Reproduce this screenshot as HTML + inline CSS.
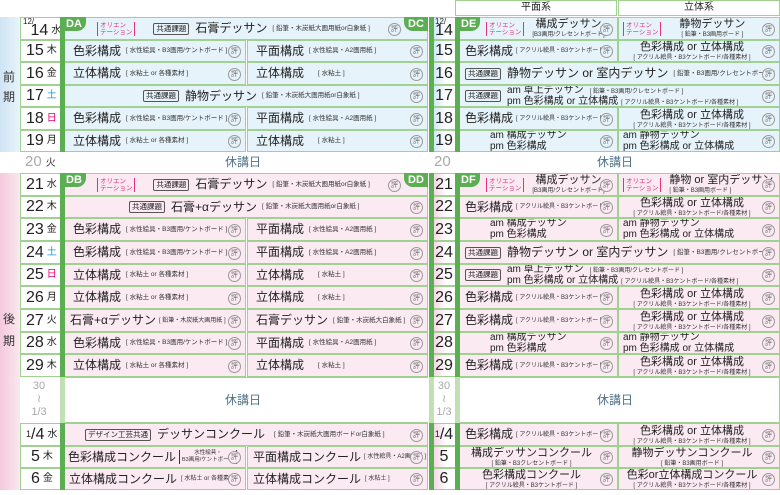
<!DOCTYPE html><html><head><meta charset="utf-8"><style>
body{margin:0;width:780px;height:495px;background:#fff;position:relative;overflow:hidden;font-family:"Liberation Sans","Noto Sans CJK JP",sans-serif;color:#222}
.a{position:absolute}
.r{position:absolute;left:0;width:780px}
.c{position:absolute;top:0;height:100%;box-sizing:border-box;border:1px solid #9fd291;display:flex;align-items:center;white-space:nowrap;font-size:12px;line-height:13px;padding-left:8px;overflow:hidden}
.f .c{background:#e6f3fb}.b .c{background:#fbeaf2}
.col{flex-direction:column;justify-content:center;font-size:11px;line-height:12px;padding-left:0;padding-right:14px}
.col .ss,.two .ss{line-height:8px;position:relative;top:1px}
.col.l{align-items:flex-start;padding-left:30px}
.h{position:absolute;right:4px;top:50%;margin-top:-6px;width:11px;height:11px;border:1px solid #999;border-radius:50%;font-size:7px;line-height:11px;text-align:center;color:#666;background:inherit}
.s{font-size:6.5px;margin-left:5px;color:#333;line-height:8px}
.ss{font-size:6px;color:#333;line-height:8px}
.k{border:1px solid #555;border-radius:2px;font-size:7.5px;padding:0 2px;line-height:10px;margin-right:6px}
.o{font-size:6.5px;line-height:7px;color:#e5307e;border-left:1px solid #e5307e;border-right:1px solid #e5307e;padding:0 2px;margin-right:8px}
.l1{left:64px;width:182px}.l2{left:247px;width:181px}.lf{left:64px;width:364px}
.r1{left:459px;width:159px}.r2{left:618px;width:162px}.rf{left:459px;width:321px}
.d{position:absolute;top:0;height:100%;box-sizing:border-box;border:1px solid #9fd291;background:#fff;display:flex;align-items:center;font-size:16px;line-height:16px}
.dl{left:20px;width:41px;padding-left:5px}
.dl i{font-style:normal;font-size:10px;margin-left:3px}
.dr{left:432px;width:24px;justify-content:center;background:linear-gradient(90deg,#cfe6f5,#fff 60%)}
.b .dr{background:linear-gradient(90deg,#f6d3e2,#fff 60%)}
.sat{color:#1a9ad6!important}.sun{color:#e5006e!important}
.tab{position:absolute;background:#5cae52;color:#fff;font-weight:bold;font-size:11px;line-height:14px;padding:0 4px;border-radius:0 0 9px 0;z-index:3}
.bar{position:absolute;background:#5cae52;width:5px;z-index:2}
.hol{position:absolute;color:#4f7487;font-size:12px;line-height:14px}
.am{font-size:10px;line-height:10.5px}
.am>span:nth-child(2){position:relative;top:0.5px}
.two{display:flex;flex-direction:column;align-items:center;line-height:11px;font-size:11px}
</style></head><body>
<div class="a" style="left:0;top:17px;width:20px;height:135px;background:linear-gradient(90deg,#cfe4f4,#e9f3fb)"></div>
<div class="a" style="left:0;top:173px;width:20px;height:317px;background:linear-gradient(90deg,#f4c9dc,#fbe8f0)"></div>
<div class="a" style="left:3px;top:67px;font-size:12px;line-height:20px;color:#333">前<br>期</div>
<div class="a" style="left:3px;top:308px;font-size:12px;line-height:22px;color:#333">後<br>期</div>
<div class="a" style="left:455px;top:0;width:162px;height:16px;border:1px solid #9fd291;box-sizing:border-box;font-size:10px;text-align:center;line-height:14px">平面系</div>
<div class="a" style="left:618px;top:0;width:162px;height:16px;border:1px solid #9fd291;box-sizing:border-box;font-size:10px;text-align:center;line-height:14px">立体系</div>
<div class="bar" style="left:60px;top:17px;height:135px"></div>
<div class="bar" style="left:60px;top:173px;height:204px"></div>
<div class="bar" style="left:60px;top:377px;height:46px;background:#c3e0b5"></div>
<div class="bar" style="left:60px;top:423px;height:67px"></div>
<div class="bar" style="left:429px;top:17px;height:135px"></div>
<div class="bar" style="left:429px;top:173px;height:204px"></div>
<div class="bar" style="left:429px;top:377px;height:46px;background:#c3e0b5"></div>
<div class="bar" style="left:429px;top:423px;height:67px"></div>
<div class="bar" style="left:455px;top:17px;height:135px"></div>
<div class="bar" style="left:455px;top:173px;height:204px"></div>
<div class="bar" style="left:455px;top:377px;height:46px;background:#c3e0b5"></div>
<div class="bar" style="left:455px;top:423px;height:67px"></div>
<div class="tab" style="left:62px;top:17px">DA</div><div class="tab" style="left:404px;top:17px;border-radius:0 0 0 9px">DC</div><div class="tab" style="left:457px;top:17px">DE</div>
<div class="tab" style="left:62px;top:173px">DB</div><div class="tab" style="left:404px;top:173px;border-radius:0 0 0 9px">DD</div><div class="tab" style="left:457px;top:173px">DF</div>

<div class="r f" style="top:17px;height:23px">
<div class="d dl" style="padding-top:4px"><span style="position:absolute;left:2px;top:0;font-size:8px;line-height:8px">12/</span>&nbsp;14<i>水</i></div>
<div class="c lf" style="padding-left:32px"><span class="o">オリエン<br>テーション</span><span style="width:10px"></span><span class="k">共通課題</span>石膏デッサン<span class="s">[ 鉛筆・木炭紙大画用紙or白象紙 ]</span><span class="h" style="right:26px">評</span></div>
<div class="d dr" style="padding-top:4px"><span style="position:absolute;left:2px;top:0;font-size:8px;line-height:8px">12/</span>14</div>
<div class="c r1" style="padding-left:26px"><span class="o">オリエン<br>テーション</span><span class="two">構成デッサン<span class="ss">[B3画用/クレセントボード]</span></span><span class="h">評</span></div>
<div class="c r2" style="padding-left:4px"><span class="o">オリエン<br>テーション</span><span class="two" style="margin-left:10px">静物デッサン<span class="ss">[ 鉛筆・B3画用ボード ]</span></span><span class="h">評</span></div>
</div>
<div class="r f" style="top:40px;height:22px">
<div class="d dl">15<i>木</i></div>
<div class="c l1">色彩構成<span class="s">[ 水性絵具・B3画用/ケントボード ]</span><span class="h">評</span></div>
<div class="c l2">平面構成<span class="s">[ 水性絵具・A2画用紙 ]</span><span class="h">評</span></div>
<div class="d dr">15</div>
<div class="c r1" style="padding-left:5px">色彩構成<span class="ss" style="margin-left:3px">[ アクリル絵具・B3ケントボード ]</span><span class="h">評</span></div>
<div class="c r2 col">色彩構成 or 立体構成<span class="ss">[ アクリル絵具・B3ケントボード/各種素材 ]</span><span class="h">評</span></div>
</div>
<div class="r f" style="top:62px;height:23px">
<div class="d dl">16<i>金</i></div>
<div class="c l1">立体構成<span class="s">[ 水粘土 or 各種素材 ]</span><span class="h">評</span></div>
<div class="c l2">立体構成<span class="s" style="margin-left:14px">[ 水粘土 ]</span><span class="h">評</span></div>
<div class="d dr">16</div>
<div class="c rf" style="padding-left:5px"><span class="k">共通課題</span>静物デッサン or 室内デッサン<span class="s">[ 鉛筆・B3画用/クレセントボード ]</span><span class="h">評</span></div>
</div>
<div class="r f" style="top:85px;height:22px">
<div class="d dl">17<i class="sat">土</i></div>
<div class="c lf" style="padding-left:78px"><span class="k">共通課題</span>静物デッサン<span class="s">[ 鉛筆・木炭紙大画用紙or白象紙 ]</span><span class="h">評</span></div>
<div class="d dr">17</div>
<div class="c rf" style="padding-left:5px"><span class="k">共通課題</span><span style="display:flex;flex-direction:column" class="am"><span>am 卓上デッサン<span class="ss" style="margin-left:6px">[ 鉛筆・B3画用/クレセントボード ]</span></span><span>pm 色彩構成 or 立体構成<span class="ss" style="margin-left:3px">[ アクリル絵具・B3ケントボード/各種素材 ]</span></span></span><span class="h">評</span></div>
</div>
<div class="r f" style="top:107px;height:23px">
<div class="d dl">18<i class="sun">日</i></div>
<div class="c l1">色彩構成<span class="s">[ 水性絵具・B3画用/ケントボード ]</span><span class="h">評</span></div>
<div class="c l2">平面構成<span class="s">[ 水性絵具・A2画用紙 ]</span><span class="h">評</span></div>
<div class="d dr">18</div>
<div class="c r1" style="padding-left:5px">色彩構成<span class="ss" style="margin-left:3px">[ アクリル絵具・B3ケントボード ]</span><span class="h">評</span></div>
<div class="c r2 col">色彩構成 or 立体構成<span class="ss">[ アクリル絵具・B3ケントボード/各種素材 ]</span><span class="h">評</span></div>
</div>
<div class="r f" style="top:130px;height:22px">
<div class="d dl">19<i>月</i></div>
<div class="c l1">立体構成<span class="s">[ 水粘土 or 各種素材 ]</span><span class="h">評</span></div>
<div class="c l2">立体構成<span class="s" style="margin-left:14px">[ 水粘土 ]</span><span class="h">評</span></div>
<div class="d dr">19</div>
<div class="c r1 col l am"><span>am 構成デッサン</span><span>pm 色彩構成</span><span class="h">評</span></div>
<div class="c r2 col l am" style="padding-left:4px"><span>am 静物デッサン</span><span>pm 色彩構成 or 立体構成</span><span class="h">評</span></div>
</div>
<div class="a" style="left:25px;top:154px;font-size:15px;line-height:16px;color:#aaa">20<span style="font-size:10px;color:#333;margin-left:4px">火</span></div>
<div class="hol" style="left:225px;top:155px">休講日</div>
<div class="a" style="left:434px;top:154px;font-size:15px;line-height:16px;color:#aaa">20</div>
<div class="hol" style="left:597px;top:155px">休講日</div>

<div class="r b" style="top:173px;height:23px">
<div class="d dl">21<i>水</i></div>
<div class="c lf" style="padding-left:32px"><span class="o">オリエン<br>テーション</span><span style="width:10px"></span><span class="k">共通課題</span>石膏デッサン<span class="s">[ 鉛筆・木炭紙大画用紙or白象紙 ]</span><span class="h" style="right:26px">評</span></div>
<div class="d dr">21</div>
<div class="c r1" style="padding-left:26px"><span class="o">オリエン<br>テーション</span><span class="two">構成デッサン<span class="ss">[B3画用/クレセントボード]</span></span><span class="h">評</span></div>
<div class="c r2" style="padding-left:4px"><span class="o">オリエン<br>テーション</span><span class="two" style="align-items:flex-start">静物 or 室内デッサン<span class="ss">[ 鉛筆・B3画用ボード ]</span></span><span class="h">評</span></div>
</div>
<div class="r b" style="top:196px;height:22px">
<div class="d dl">22<i>木</i></div>
<div class="c lf" style="padding-left:64px"><span class="k">共通課題</span>石膏+αデッサン<span class="s">[ 鉛筆・木炭紙大画用紙or白象紙 ]</span><span class="h">評</span></div>
<div class="d dr">22</div>
<div class="c r1" style="padding-left:5px">色彩構成<span class="ss" style="margin-left:3px">[ アクリル絵具・B3ケントボード ]</span><span class="h">評</span></div>
<div class="c r2 col">色彩構成 or 立体構成<span class="ss">[ アクリル絵具・B3ケントボード/各種素材 ]</span><span class="h">評</span></div>
</div>
<div class="r b" style="top:218px;height:23px">
<div class="d dl">23<i>金</i></div>
<div class="c l1">色彩構成<span class="s">[ 水性絵具・B3画用/ケントボード ]</span><span class="h">評</span></div>
<div class="c l2">平面構成<span class="s">[ 水性絵具・A2画用紙 ]</span><span class="h">評</span></div>
<div class="d dr">23</div>
<div class="c r1 col l am"><span>am 構成デッサン</span><span>pm 色彩構成</span><span class="h">評</span></div>
<div class="c r2 col l am" style="padding-left:4px"><span>am 静物デッサン</span><span>pm 色彩構成 or 立体構成</span><span class="h">評</span></div>
</div>
<div class="r b" style="top:241px;height:23px">
<div class="d dl">24<i class="sat">土</i></div>
<div class="c l1">色彩構成<span class="s">[ 水性絵具・B3画用/ケントボード ]</span><span class="h">評</span></div>
<div class="c l2">平面構成<span class="s">[ 水性絵具・A2画用紙 ]</span><span class="h">評</span></div>
<div class="d dr">24</div>
<div class="c rf" style="padding-left:5px"><span class="k">共通課題</span>静物デッサン or 室内デッサン<span class="s">[ 鉛筆・B3画用/クレセントボード ]</span><span class="h">評</span></div>
</div>
<div class="r b" style="top:264px;height:22px">
<div class="d dl">25<i class="sun">日</i></div>
<div class="c l1">立体構成<span class="s">[ 水粘土 or 各種素材 ]</span><span class="h">評</span></div>
<div class="c l2">立体構成<span class="s" style="margin-left:14px">[ 水粘土 ]</span><span class="h">評</span></div>
<div class="d dr">25</div>
<div class="c rf" style="padding-left:5px"><span class="k">共通課題</span><span style="display:flex;flex-direction:column" class="am"><span>am 卓上デッサン<span class="ss" style="margin-left:6px">[ 鉛筆・B3画用/クレセントボード ]</span></span><span>pm 色彩構成 or 立体構成<span class="ss" style="margin-left:3px">[ アクリル絵具・B3ケントボード/各種素材 ]</span></span></span><span class="h">評</span></div>
</div>
<div class="r b" style="top:286px;height:23px">
<div class="d dl">26<i>月</i></div>
<div class="c l1">立体構成<span class="s">[ 水粘土 or 各種素材 ]</span><span class="h">評</span></div>
<div class="c l2">立体構成<span class="s" style="margin-left:14px">[ 水粘土 ]</span><span class="h">評</span></div>
<div class="d dr">26</div>
<div class="c r1" style="padding-left:5px">色彩構成<span class="ss" style="margin-left:3px">[ アクリル絵具・B3ケントボード ]</span><span class="h">評</span></div>
<div class="c r2 col">色彩構成 or 立体構成<span class="ss">[ アクリル絵具・B3ケントボード/各種素材 ]</span><span class="h">評</span></div>
</div>
<div class="r b" style="top:309px;height:23px">
<div class="d dl">27<i>火</i></div>
<div class="c l1" style="padding-left:5px">石膏+αデッサン<span class="ss" style="margin-left:3px">[ 鉛筆・木炭紙大画用紙 ]</span><span class="h">評</span></div>
<div class="c l2">石膏デッサン<span class="s">[ 鉛筆・木炭紙大白象紙 ]</span><span class="h">評</span></div>
<div class="d dr">27</div>
<div class="c r1" style="padding-left:5px">色彩構成<span class="ss" style="margin-left:3px">[ アクリル絵具・B3ケントボード ]</span><span class="h">評</span></div>
<div class="c r2 col">色彩構成 or 立体構成<span class="ss">[ アクリル絵具・B3ケントボード/各種素材 ]</span><span class="h">評</span></div>
</div>
<div class="r b" style="top:332px;height:22px">
<div class="d dl">28<i>水</i></div>
<div class="c l1">色彩構成<span class="s">[ 水性絵具・B3画用/ケントボード ]</span><span class="h">評</span></div>
<div class="c l2">平面構成<span class="s">[ 水性絵具・A2画用紙 ]</span><span class="h">評</span></div>
<div class="d dr">28</div>
<div class="c r1 col l am"><span>am 構成デッサン</span><span>pm 色彩構成</span><span class="h">評</span></div>
<div class="c r2 col l am" style="padding-left:4px"><span>am 静物デッサン</span><span>pm 色彩構成 or 立体構成</span><span class="h">評</span></div>
</div>
<div class="r b" style="top:354px;height:23px">
<div class="d dl">29<i>木</i></div>
<div class="c l1">立体構成<span class="s">[ 水粘土 or 各種素材 ]</span><span class="h">評</span></div>
<div class="c l2">立体構成<span class="s" style="margin-left:14px">[ 水粘土 ]</span><span class="h">評</span></div>
<div class="d dr">29</div>
<div class="c r1" style="padding-left:5px">色彩構成<span class="ss" style="margin-left:3px">[ アクリル絵具・B3ケントボード ]</span><span class="h">評</span></div>
<div class="c r2 col">色彩構成 or 立体構成<span class="ss">[ アクリル絵具・B3ケントボード/各種素材 ]</span><span class="h">評</span></div>
</div>
<div class="a" style="left:65px;top:377px;width:363px;height:46px;border-bottom:1px solid #9fd291;border-top:1px solid #9fd291;box-sizing:border-box"></div>
<div class="a" style="left:459px;top:377px;width:321px;height:46px;border:1px solid #9fd291;box-sizing:border-box"></div>
<div class="a" style="left:24px;top:380px;width:30px;text-align:center;font-size:11px;line-height:13px;color:#aaa">30<br>≀<br>1/3</div>
<div class="a" style="left:429px;top:380px;width:30px;text-align:center;font-size:11px;line-height:13px;color:#aaa">30<br>≀<br>1/3</div>
<div class="hol" style="left:225px;top:393px">休講日</div>
<div class="hol" style="left:597px;top:393px">休講日</div>
<div class="r b" style="top:423px;height:23px">
<div class="d dl"><sup style="font-size:9px;line-height:9px">1</sup>/4<i>水</i></div>
<div class="c lf" style="padding-left:20px"><span class="k">デザイン工芸共通</span>デッサンコンクール<span class="s" style="margin-left:9px">[ 鉛筆・木炭紙大画用ボードor白象紙 ]</span><span class="h">評</span></div>
<div class="d dr"><sup style="font-size:9px;line-height:9px">1</sup>/4</div>
<div class="c r1" style="padding-left:5px">色彩構成<span class="ss" style="margin-left:3px">[ アクリル絵具・B3ケントボード ]</span><span class="h">評</span></div>
<div class="c r2 col">色彩構成 or 立体構成<span class="ss">[ アクリル絵具・B3ケントボード/各種素材 ]</span><span class="h">評</span></div>
</div>
<div class="r b" style="top:446px;height:22px">
<div class="d dl" style="padding-left:10px">5<i>木</i></div>
<div class="c l1" style="padding-left:3px">色彩構成コンクール<span class="ss" style="margin-left:3px;text-align:center;line-height:7px;border-left:1px solid #333;border-right:1px solid #333;padding:0 2px;font-size:5.5px">水性絵具・<br>B3画用/ケントボード</span><span class="h">評</span></div>
<div class="c l2" style="padding-left:5px">平面構成コンクール<span class="ss" style="margin-left:3px">[ 水性絵具・A2画用紙 ]</span><span class="h">評</span></div>
<div class="d dr">5</div>
<div class="c r1 col">構成デッサンコンクール<span class="ss">[ 鉛筆・B3クレセントボード ]</span><span class="h">評</span></div>
<div class="c r2 col">静物デッサンコンクール<span class="ss">[ 鉛筆・B3画用ボード ]</span><span class="h">評</span></div>
</div>
<div class="r b" style="top:468px;height:22px">
<div class="d dl" style="padding-left:10px">6<i>金</i></div>
<div class="c l1" style="padding-left:4px">立体構成コンクール<span class="ss" style="margin-left:4px">[ 水粘土 or 各種素材 ]</span><span class="h">評</span></div>
<div class="c l2" style="padding-left:5px">立体構成コンクール<span class="ss" style="margin-left:4px">[ 水粘土 ]</span><span class="h">評</span></div>
<div class="d dr">6</div>
<div class="c r1 col">色彩構成コンクール<span class="ss">[ アクリル絵具・B3ケントボード ]</span><span class="h">評</span></div>
<div class="c r2 col">色彩or立体構成コンクール<span class="ss">[ アクリル絵具・B3ケントボード/各種素材 ]</span><span class="h">評</span></div>
</div>
</body></html>
